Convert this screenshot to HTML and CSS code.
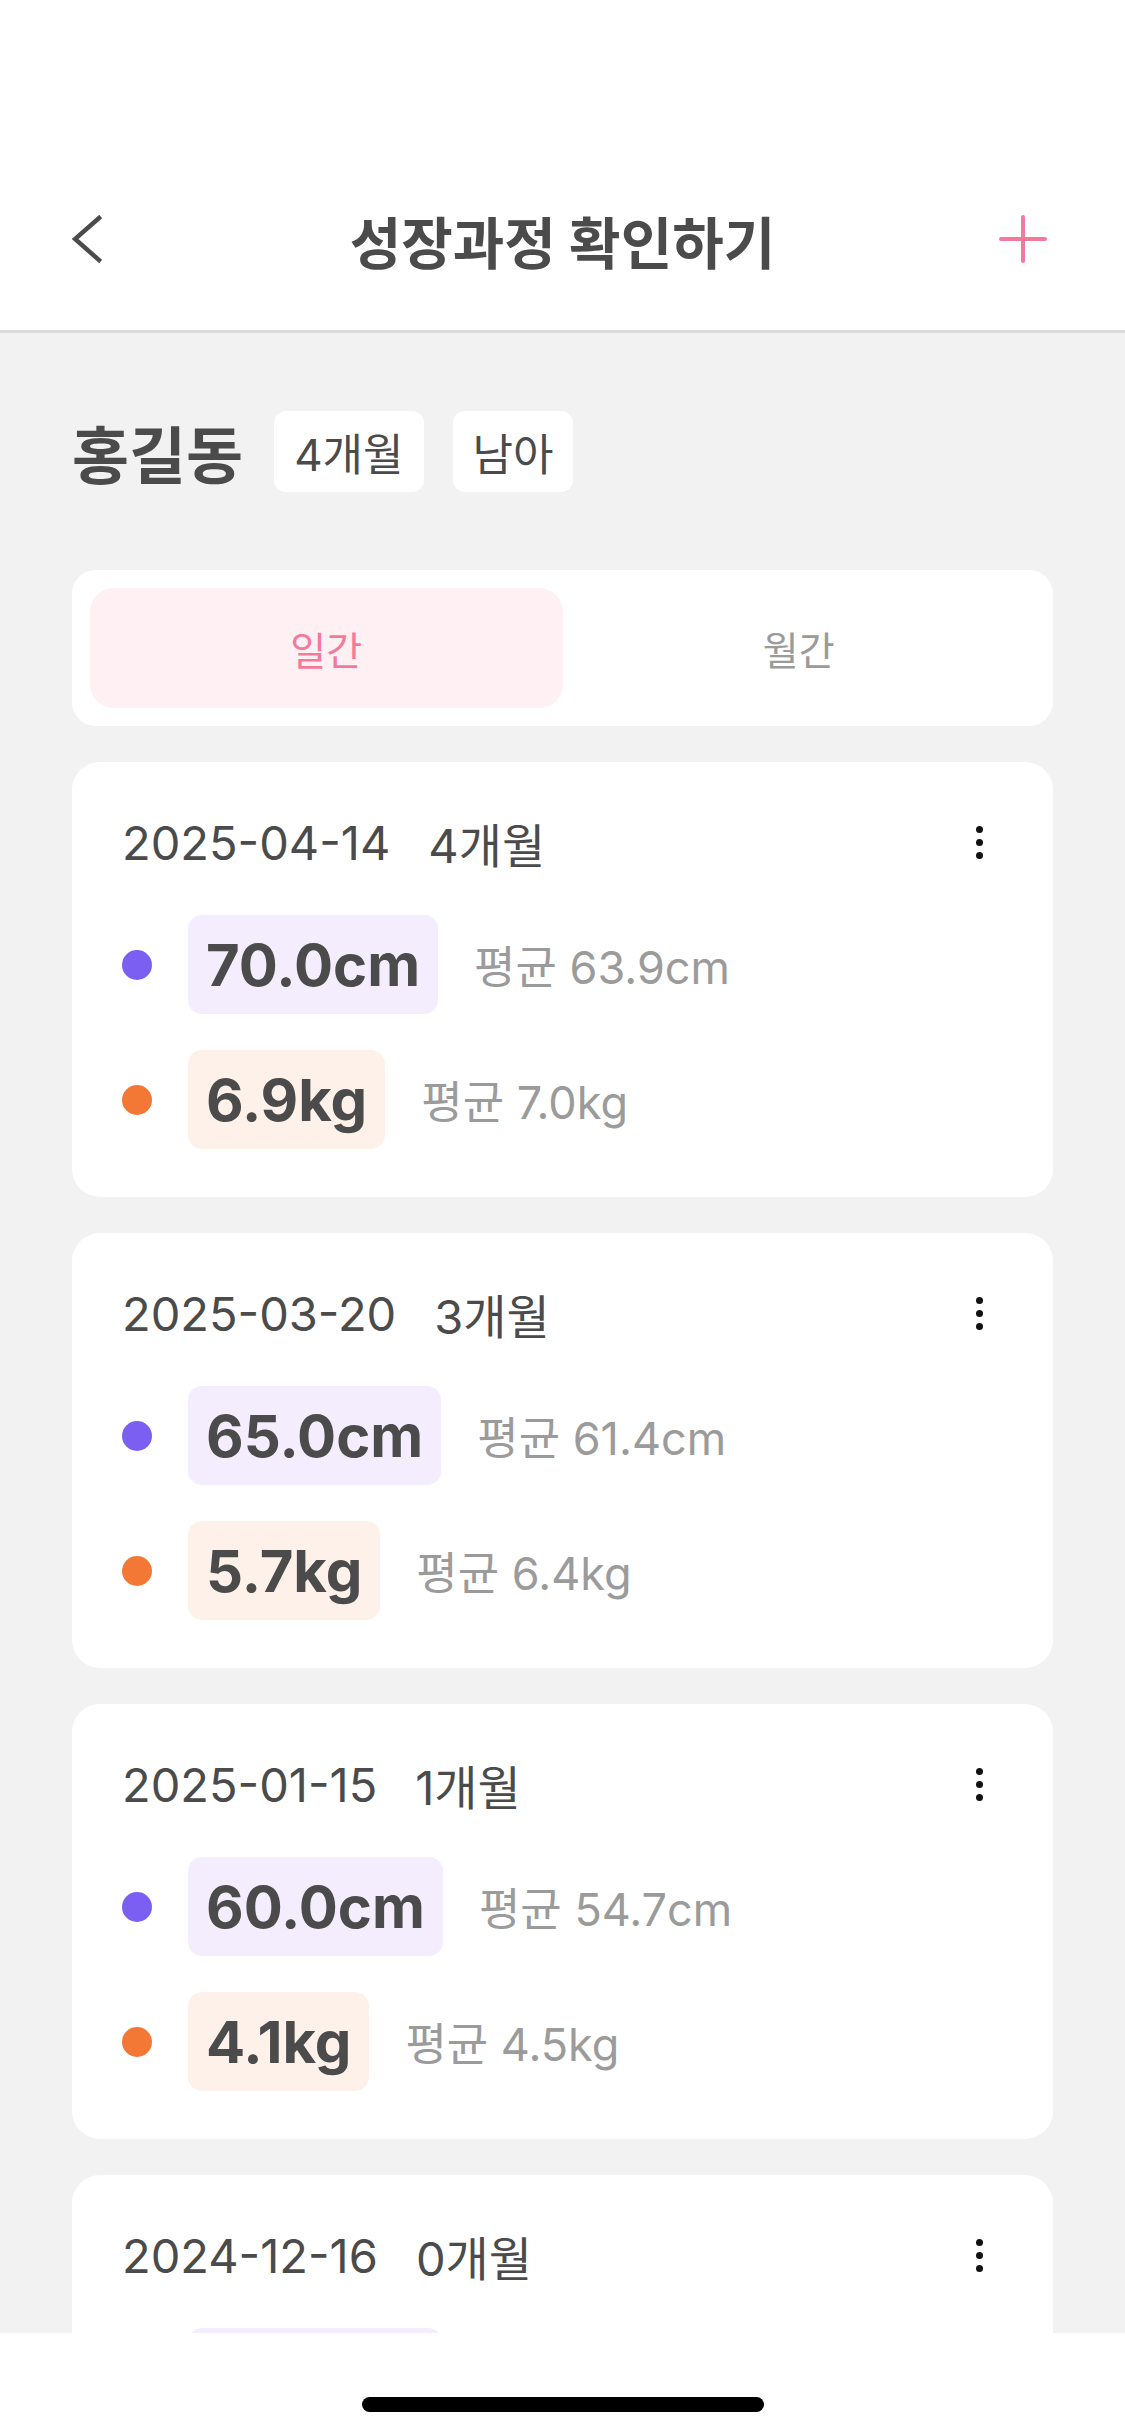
FILE: index.html
```html
<!DOCTYPE html>
<html lang="ko">
<head>
  <meta charset="UTF-8">
  <title>성장과정 확인하기</title>
  <link rel="stylesheet" href="styles.css">
</head>
<body>

<div class="app">
  <header class="topbar">
    <div class="status"></div>
    <nav class="navbar">
      <button class="nav-btn back" aria-label="뒤로">
        <svg width="30" height="48" viewBox="0 0 30 48">
          <polyline points="27,3 3,24 27,45" fill="none" stroke="currentColor" stroke-width="4.5" stroke-linecap="square"/>
        </svg>
      </button>
      <h1 class="nav-title">성장과정 확인하기</h1>
      <button class="nav-btn add" aria-label="추가">
        <svg width="48" height="48" viewBox="0 0 48 48">
          <path d="M24 2V46M2 24H46" fill="none" stroke="currentColor" stroke-width="4" stroke-linecap="round"/>
        </svg>
      </button>
    </nav>
  </header>

  <main class="content">
    <div class="profile">
      <span class="profile-name">홍길동</span>
      <span class="tag">4개월</span>
      <span class="tag">남아</span>
    </div>

    <div class="tabs">
      <button class="tab active">일간</button>
      <button class="tab">월간</button>
    </div>

    <div class="records">
      <div class="record">
        <div class="record-head">
          <span class="record-date">2025-04-14</span>
          <span class="record-age">4개월</span>
          <button class="more" aria-label="더보기"><i></i><i></i><i></i></button>
        </div>
        <div class="measure">
          <span class="dot height"></span>
          <span class="value height">70.0cm</span>
          <span class="avg">평균 63.9cm</span>
        </div>
        <div class="measure">
          <span class="dot weight"></span>
          <span class="value weight">6.9kg</span>
          <span class="avg">평균 7.0kg</span>
        </div>
      </div>

      <div class="record">
        <div class="record-head">
          <span class="record-date">2025-03-20</span>
          <span class="record-age">3개월</span>
          <button class="more" aria-label="더보기"><i></i><i></i><i></i></button>
        </div>
        <div class="measure">
          <span class="dot height"></span>
          <span class="value height">65.0cm</span>
          <span class="avg">평균 61.4cm</span>
        </div>
        <div class="measure">
          <span class="dot weight"></span>
          <span class="value weight">5.7kg</span>
          <span class="avg">평균 6.4kg</span>
        </div>
      </div>

      <div class="record">
        <div class="record-head">
          <span class="record-date">2025-01-15</span>
          <span class="record-age">1개월</span>
          <button class="more" aria-label="더보기"><i></i><i></i><i></i></button>
        </div>
        <div class="measure">
          <span class="dot height"></span>
          <span class="value height">60.0cm</span>
          <span class="avg">평균 54.7cm</span>
        </div>
        <div class="measure">
          <span class="dot weight"></span>
          <span class="value weight">4.1kg</span>
          <span class="avg">평균 4.5kg</span>
        </div>
      </div>

      <div class="record">
        <div class="record-head">
          <span class="record-date">2024-12-16</span>
          <span class="record-age">0개월</span>
          <button class="more" aria-label="더보기"><i></i><i></i><i></i></button>
        </div>
        <div class="measure">
          <span class="dot height"></span>
          <span class="value height">50.0cm</span>
          <span class="avg">평균 49.9cm</span>
        </div>
        <div class="measure">
          <span class="dot weight"></span>
          <span class="value weight">3.3kg</span>
          <span class="avg">평균 3.3kg</span>
        </div>
      </div>
    </div>
  </main>

  <div class="home-bar"><span class="home-indicator"></span></div>
</div>

</body>
</html>
```

FILE: styles.css
```css
body {
  margin: 0;
  font-family: "Inter", "Noto Sans CJK KR", sans-serif;
  color: #4b4b4b;
}
button {
  font-family: inherit;
  border: none;
  background: none;
  padding: 0;
  cursor: pointer;
}
.app {
  display: flex;
  flex-direction: column;
  width: 1125px;
  height: 2436px;
  background-color: #f2f2f2;
  overflow: hidden;
}

/* header */
.topbar {
  background-color: #fff;
  border-bottom: 3px solid #dcdcdc;
}
.status {
  height: 148px;
}
.navbar {
  display: grid;
  grid-template-columns: 1fr auto 1fr;
  align-items: center;
  height: 182px;
  padding: 0 72px;
}
.nav-btn {
  display: flex;
}
.nav-btn.back {
  justify-self: start;
  color: #4b4b4b;
}
.nav-btn.add {
  justify-self: end;
  margin-right: 6px;
  color: #f5799b;
}
.nav-title {
  margin: 0;
  font-size: 56px;
  font-weight: 700;
  color: #4b4b4b;
}

/* content */
.content {
  flex: 1;
  overflow: hidden;
  padding: 78px 72px 0;
}
.profile {
  display: flex;
  align-items: center;
  gap: 29px;
  height: 81px;
  margin-bottom: 78px;
}
.profile-name {
  font-size: 62px;
  font-weight: 700;
  margin-right: 2px;
}
.tag {
  display: flex;
  align-items: center;
  height: 81px;
  padding: 0 20px;
  font-size: 44px;
  background-color: #fff;
  border-radius: 12px;
}
.tabs {
  display: flex;
  padding: 18px;
  margin-bottom: 36px;
  background-color: #fff;
  border-radius: 24px;
}
.tab {
  flex: 1;
  height: 120px;
  font-size: 39px;
  color: #9b9b9b;
  border-radius: 24px;
}
.tab.active {
  background-color: #fff0f3;
  color: #f5799b;
}

/* records */
.records {
  display: flex;
  flex-direction: column;
  gap: 36px;
}
.record {
  background-color: #fff;
  border-radius: 28px;
  padding: 50px 50px 48px;
}
.record-head {
  display: flex;
  align-items: center;
  gap: 38px;
  height: 60px;
  margin-bottom: 43px;
  font-size: 47px;
}
.more {
  margin-left: auto;
  display: flex;
  flex-direction: column;
  align-items: center;
  gap: 6px;
  width: 48px;
}
.more i {
  width: 7px;
  height: 7px;
  border-radius: 50%;
  background-color: #111;
}
.measure {
  display: flex;
  align-items: center;
}
.measure + .measure {
  margin-top: 36px;
}
.dot {
  width: 30px;
  height: 30px;
  border-radius: 50%;
  margin-right: 36px;
}
.dot.height {
  background-color: #7b5ff2;
}
.dot.weight {
  background-color: #f37836;
}
.value {
  display: flex;
  align-items: center;
  height: 99px;
  padding: 0 18px;
  font-size: 58px;
  font-weight: 700;
  border-radius: 14px;
  color: #4b4b4b;
}
.value.height {
  background-color: #f3edfd;
}
.value.weight {
  background-color: #fef1ea;
}
.avg {
  margin-left: 36px;
  font-size: 45px;
  color: #9b9b9b;
}

/* bottom */
.home-bar {
  display: flex;
  justify-content: center;
  height: 103px;
  background-color: #fff;
}
.home-indicator {
  width: 402px;
  height: 15px;
  margin-top: 64px;
  border-radius: 8px;
  background-color: #000;
}
```
